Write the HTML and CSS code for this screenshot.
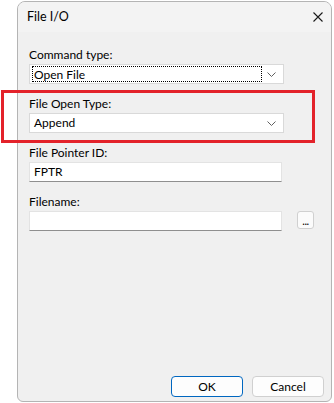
FILE: index.html
```html
<!DOCTYPE html>
<html>
<head>
<meta charset="utf-8">
<link rel="stylesheet" href="styles.css">
</head>
<body>
<div class="window">
  <div class="titlebar">
    <span class="title">File I/O</span>
    <svg class="close" width="10" height="10" viewBox="0 0 10 10"><path d="M0.5 0.5 L9.5 9.5 M9.5 0.5 L0.5 9.5" stroke="#1a1a1a" stroke-width="1.1" fill="none"/></svg>
  </div>
  <div class="content">
    <div class="field">
      <div class="label">Command type:</div>
      <div class="combo"><span class="focus">Open File</span><svg class="chev" width="9" height="5" viewBox="0 0 9 5"><path d="M0.5 0.5 L4.5 4.5 L8.5 0.5" stroke="#606060" fill="none"/></svg></div>
    </div>
    <div class="field">
      <div class="label">File Open Type:</div>
      <div class="combo"><span class="val">Append</span><svg class="chev" width="9" height="5" viewBox="0 0 9 5"><path d="M0.5 0.5 L4.5 4.5 L8.5 0.5" stroke="#606060" fill="none"/></svg></div>
    </div>
    <div class="field">
      <div class="label">File Pointer ID:</div>
      <div class="text">FPTR</div>
    </div>
    <div class="field">
      <div class="label">Filename:</div>
      <div class="row">
        <div class="text"></div>
        <div class="dots">...</div>
      </div>
    </div>
    <div class="buttons">
      <div class="btn ok">OK</div>
      <div class="btn">Cancel</div>
    </div>
  </div>
</div>
<div class="highlight"></div>
</body>
</html>
```
FILE: styles.css
```css
html, body {
  margin: 0;
  padding: 0;
  background: #ffffff;
}
body {
  font-family: Lato, "Liberation Sans", sans-serif;
  font-size: 12px;
  color: #000;
  width: 334px;
  height: 403px;
  overflow: hidden;
  position: relative;
}
.window {
  margin: 1px 0 0 17px;
  width: 313px;
  height: 399px;
  border: 1px solid #b4b4b4;
  border-radius: 8px 8px 6px 6px;
  background: #f0f0f0;
  display: flex;
  flex-direction: column;
  overflow: hidden;
}
.titlebar {
  height: 30px;
  background: #f3f3f3;
  display: flex;
  align-items: center;
  padding-left: 9px;
  padding-right: 8px;
  flex: none;
}
.title {
  flex: 1;
  font-size: 12.5px;
  line-height: 16px;
}
.close {
  display: block;
}
.content {
  flex: 1;
  display: flex;
  flex-direction: column;
  padding: 15px 7px 4px 11px;
}
.field {
  margin-bottom: 12px;
}
.label {
  line-height: 16px;
  height: 16px;
  margin-bottom: 1px;
}
.combo {
  height: 18px;
  border: 1px solid #d9d9d9;
  background: #ffffff;
  display: flex;
  align-items: center;
  padding: 0 5px 0 2px;
  box-sizing: content-box;
  width: 246px;
}
.focus {
  flex: 1;
  height: 16px;
  line-height: 15px;
  border: 1px dotted #000;
  padding-left: 1px;
  margin-right: 5px;
  box-sizing: border-box;
}
.val {
  flex: 1;
  line-height: 16px;
  padding-left: 2px;
}
.chev {
  display: block;
  margin-right: 2px;
}
.text {
  width: 251px;
  height: 18px;
  line-height: 18px;
  border: 1px solid #e3e3e3;
  border-bottom-color: #8f8f8f;
  background: #ffffff;
  box-sizing: content-box;
  text-indent: 4px;
}
.row {
  display: flex;
  align-items: flex-start;
}
.dots {
  margin-left: 15px;
  width: 15px;
  height: 16px;
  border: 1px solid #d0d0d0;
  border-radius: 3px;
  background: #fbfbfb;
  text-align: center;
  line-height: 18px;
  font-size: 11px;
  letter-spacing: -0.5px;
}
.buttons {
  margin-top: auto;
  display: flex;
  justify-content: flex-end;
  gap: 9px;
}
.btn {
  width: 70px;
  height: 19px;
  line-height: 19px;
  text-align: center;
  border: 1px solid #d0d0d0;
  border-radius: 4px;
  background: #fdfdfd;
}
.btn.ok {
  border-color: #0067c0;
}
.highlight {
  position: absolute;
  left: 1px;
  top: 90px;
  width: 308px;
  height: 47px;
  border: 3px solid #e3222a;
}
```
